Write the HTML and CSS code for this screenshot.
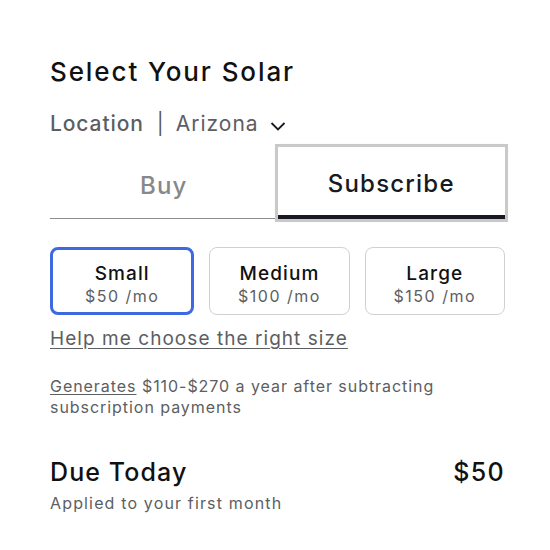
FILE: index.html
```html
<!DOCTYPE html>
<html>
<head>
<meta charset="utf-8">
<link rel="stylesheet" href="styles.css">
</head>
<body>
<main class="panel">
  <h1 class="title">Select Your Solar</h1>
  <div class="location">
    <span class="loc-label">Location</span>
    <span class="loc-sep">|</span>
    <span class="loc-value">Arizona</span>
    <svg class="chev" width="18" height="12" viewBox="0 0 18 12"><path d="M2.5 3 L9 9.5 L15.5 3" fill="none" stroke="#171a20" stroke-width="1.8"/></svg>
  </div>
  <div class="tabs">
    <div class="tab">Buy</div>
    <div class="tab tab-active">Subscribe</div>
  </div>
  <div class="sizes">
    <div class="size size-selected"><div class="size-name">Small</div><div class="size-price">$50 /mo</div></div>
    <div class="size"><div class="size-name">Medium</div><div class="size-price">$100 /mo</div></div>
    <div class="size"><div class="size-name">Large</div><div class="size-price">$150 /mo</div></div>
  </div>
  <a class="help">Help me choose the right size</a>
  <p class="generates"><span class="u">Generates</span> $110-$270 a year after subtracting subscription payments</p>
  <div class="due">
    <span>Due Today</span>
    <span class="due-amt">$50</span>
  </div>
  <p class="applied">Applied to your first month</p>
</main>
</body>
</html>
```
FILE: styles.css
```css
html, body { margin: 0; padding: 0; background: #fff; }
body { font-family: Inter, "Liberation Sans", sans-serif; color: #171a20; }
.panel { width: 455px; padding: 55px 0 0 50px; }
.title { margin: 0; font-size: 26px; font-weight: 500; line-height: 34px; letter-spacing: 1.9px; color: #111; }
.location { display: flex; align-items: center; margin-top: 21px; font-size: 21px; line-height: 28px; color: #5c5e62; }
.loc-label { font-weight: 500; letter-spacing: 0.9px; }
.loc-sep { margin: 0 12px 0 13px; }
.loc-value { font-weight: 400; letter-spacing: 1px; }
.chev { margin-left: 10px; margin-top: 3px; }
.tabs { display: flex; margin-top: 9px; height: 71px; border-bottom: 1px solid #8e8e8e; }
.tab { flex: 1; display: flex; align-items: center; justify-content: center; padding-top: 5px; font-size: 24px; letter-spacing: 1.2px; color: #86888b; font-weight: 500; }
.tab-active { color: #171a20; border-bottom: 4px solid #171a20; margin-bottom: -1px; outline: 3px solid #c9c9cb; box-shadow: 0 0 4px rgba(0,0,0,0.3); }
.sizes { display: flex; gap: 15px; margin-top: 28px; }
.size { flex: 1; box-sizing: border-box; height: 68px; padding-top: 7px; border: 1px solid #d0d1d2; border-radius: 8px; display: flex; flex-direction: column; align-items: center; justify-content: center; }
.size-selected { border: 3px solid #3e6ae1; }
.size-name { font-size: 19px; font-weight: 500; line-height: 22px; letter-spacing: 1.1px; color: #111; }
.size-price { font-size: 16px; line-height: 22px; letter-spacing: 1.5px; color: #5c5e62; }
.help { display: block; margin-top: 11px; font-size: 19px; line-height: 26px; letter-spacing: 1.05px; color: #5c5e62; text-decoration: underline; text-underline-offset: 3px; }
.generates { margin: 24px 0 0; width: 440px; font-size: 16px; line-height: 21px; letter-spacing: 0.95px; color: #5c5e62; }
.u { text-decoration: underline; text-underline-offset: 2px; }
.due { display: flex; justify-content: space-between; margin-top: 39px; font-size: 25px; font-weight: 500; line-height: 30px; letter-spacing: 1.1px; color: #111; }
.due-amt { letter-spacing: 1.3px; }
.applied { margin: 6px 0 0; font-size: 16px; line-height: 21px; letter-spacing: 1.15px; color: #5c5e62; }
```
